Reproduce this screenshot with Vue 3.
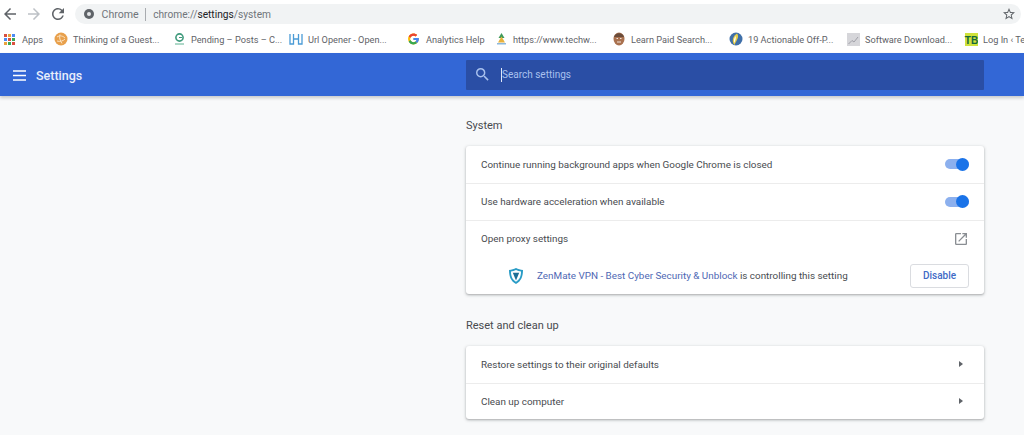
<script setup>
const bookmarks = [
  { name: 'Thinking of a Guest...', icon: 'guest', w: 118 },
  { name: 'Pending – Posts – C...', icon: 'pending', w: 117 },
  { name: 'Url Opener - Open...', icon: 'url', w: 118 },
  { name: 'Analytics Help', icon: 'google', w: 87 },
  { name: 'https://www.techw...', icon: 'tech', w: 118 },
  { name: 'Learn Paid Search...', icon: 'learn', w: 117 },
  { name: '19 Actionable Off-P...', icon: 'off', w: 117 },
  { name: 'Software Download...', icon: 'soft', w: 118 },
  { name: 'Log In ‹ Te', icon: 'tb', w: 60 }
]
const appColors = ['#d9503f', '#e8a33d', '#4c8bf5', '#4c8bf5', '#d9503f', '#3aa757', '#e8a33d', '#3aa757', '#d9503f']
</script>

<template>
  <div class="page">
    <div class="toolbar">
      <svg class="nav" width="12" height="12" viewBox="4 4 16 16"><path fill="#5f6368" d="M20 11H7.83l5.59-5.59L12 4l-8 8 8 8 1.41-1.41L7.83 13H20v-2z"/></svg>
      <svg class="nav" width="12" height="12" viewBox="4 4 16 16"><path fill="#bdc1c6" d="M12 4l-1.41 1.41L16.17 11H4v2h12.17l-5.58 5.59L12 20l8-8z"/></svg>
      <svg class="nav reload" width="12" height="12" viewBox="4 4 16 16"><path fill="#5f6368" d="M17.65 6.35A7.96 7.96 0 0 0 12 4c-4.42 0-7.99 3.58-7.99 8s3.57 8 7.99 8c3.73 0 6.84-2.55 7.73-6h-2.08A5.99 5.99 0 0 1 12 18c-3.31 0-6-2.69-6-6s2.69-6 6-6c1.66 0 3.14.69 4.22 1.78L13 11h7V4l-2.35 2.35z"/></svg>
      <div class="omnibox">
        <svg class="lock" width="10" height="10" viewBox="0 0 12 12"><circle cx="6" cy="6" r="6" fill="#5f6368"/><circle cx="6" cy="6" r="2.4" fill="#e4e6e8"/></svg>
        <span class="site">Chrome</span>
        <span class="sep"></span>
        <span class="url">chrome://<b>settings</b>/system</span>
        <svg class="star" width="12" height="12" viewBox="2 2 20 20"><path fill="#5f6368" d="M22 9.24l-7.19-.62L12 2 9.19 8.63 2 9.24l5.46 4.73L5.82 21 12 17.27 18.18 21l-1.63-7.03L22 9.24zM12 15.4l-3.76 2.27 1-4.28-3.32-2.88 4.38-.38L12 6.1l1.71 4.04 4.38.38-3.32 2.88 1 4.28L12 15.4z"/></svg>
      </div>
    </div>

    <div class="bookmarks">
      <div class="bm apps">
        <span class="grid"><i v-for="(c, i) in appColors" :key="i" :style="{ background: c }"></i></span>
        <span>Apps</span>
      </div>
      <div v-for="b in bookmarks" :key="b.name" class="bm" :style="{ width: b.w + 'px' }">
        <svg class="fav" width="14" height="14" viewBox="0 0 14 14">
          <template v-if="b.icon === 'guest'">
            <circle cx="7" cy="7" r="6.5" fill="#e8a04c"/>
            <path d="M3 5c3-2 6-1 8 1M3 9c3 1 6 0 8-2M6 2.5c-1 3 0 6 2 9" fill="none" stroke="#fbe3c2" stroke-width="1"/>
          </template>
          <template v-else-if="b.icon === 'pending'">
            <circle cx="7.5" cy="5.5" r="3.6" fill="none" stroke="#3f9a7c" stroke-width="1.6"/>
            <path d="M7 5.5h3" stroke="#3f9a7c" stroke-width="1"/>
            <path d="M3 12h9" stroke="#8cc7b0" stroke-width="1.4"/>
          </template>
          <template v-else-if="b.icon === 'url'">
            <path d="M1 2v10h3.5V2M9.5 2v10H13V2M4.5 7h5" fill="none" stroke="#4a9bd6" stroke-width="1.3"/>
          </template>
          <template v-else-if="b.icon === 'google'">
            <g transform="translate(0 .5) scale(.27)">
              <path fill="#fbbc05" d="M43.6 20.5H42V20H24v8h11.3C33.7 32.7 29.2 36 24 36c-6.6 0-12-5.4-12-12s5.4-12 12-12c3.1 0 5.8 1.2 7.9 3l5.7-5.7C34 6.1 29.3 4 24 4 13 4 4 13 4 24s9 20 20 20 20-9 20-20c0-1.3-.1-2.4-.4-3.5z"/>
              <path fill="#ea4335" d="M6.3 14.7l6.6 4.8C14.7 15.1 19 12 24 12c3.1 0 5.8 1.2 7.9 3l5.7-5.7C34 6.1 29.3 4 24 4 16.3 4 9.7 8.3 6.3 14.7z"/>
              <path fill="#34a853" d="M24 44c5.2 0 9.9-2 13.4-5.2l-6.2-5.2C29.2 35.1 26.7 36 24 36c-5.2 0-9.6-3.3-11.3-8l-6.5 5C9.5 39.6 16.2 44 24 44z"/>
              <path fill="#4285f4" d="M43.6 20.5H42V20H24v8h11.3c-.8 2.2-2.2 4.2-4.1 5.6l6.2 5.2C37 39.2 44 34 44 24c0-1.3-.1-2.4-.4-3.5z"/>
            </g>
          </template>
          <template v-else-if="b.icon === 'tech'">
            <path d="M7.5 1l3 5h-6z" fill="#3f9a5a"/>
            <path d="M7.5 4.5l3.5 6H4z" fill="#e8b23d"/>
            <path d="M3 11h9v1.5H3z" fill="#8db8dc"/>
          </template>
          <template v-else-if="b.icon === 'learn'">
            <ellipse cx="7" cy="7" rx="5.5" ry="6.5" fill="#a9714f"/>
            <path d="M2 5C3 0 11 0 12 5z" fill="#6b4c3b"/>
            <path d="M4.5 6.5H6M8 6.5h1.5M5 10h4" stroke="#f1e4da" stroke-width="1"/>
          </template>
          <template v-else-if="b.icon === 'off'">
            <circle cx="7" cy="7" r="6.5" fill="#3f6fa8"/>
            <path d="M8 1.5C11 5 7 9 5.5 13 2 9 4.5 3.5 8 1.5z" fill="#e6cf4a"/>
            <path d="M6.5 4C7.5 6 6 9 5.5 11 4.5 9 5 6 6.5 4z" fill="#fff"/>
          </template>
          <template v-else-if="b.icon === 'soft'">
            <rect x="1" y="1" width="13" height="13" fill="#d6d6da"/>
            <path d="M2.5 12L6 8.5l2 1.5 4-5" fill="none" stroke="#a0a0a8" stroke-width="1"/>
          </template>
          <template v-else>
            <rect x="1" y="1" width="13" height="13" fill="#cfe23a"/>
            <text x="7.5" y="11.5" text-anchor="middle" font-size="10" font-weight="700" font-family="Liberation Sans" fill="#14683c">TB</text>
          </template>
        </svg>
        <span>{{ b.name }}</span>
      </div>
    </div>

    <header class="header">
      <div class="brand">
        <svg width="13" height="11" viewBox="0 0 13 11"><path d="M0 1h13M0 5.500h13M0 10h13" stroke="#fff" stroke-width="1.500"/></svg>
        <span>Settings</span>
      </div>
      <div class="search">
        <svg class="search-icon" width="13" height="13" viewBox="3 3 18 18"><path fill="#a9c1ee" d="M15.5 14h-.79l-.28-.27A6.47 6.47 0 0 0 16 9.5 6.5 6.5 0 1 0 9.5 16c1.61 0 3.09-.59 4.23-1.57l.27.28v.79l5 4.99L20.49 19l-4.99-5zm-6 0C7.01 14 5 11.99 5 9.5S7.01 5 9.5 5 14 7.01 14 9.5 11.99 14 9.5 14z"/></svg>
        <span class="caret"></span>
        <span class="placeholder">Search settings</span>
      </div>
    </header>

    <main class="content">
      <h2>System</h2>
      <section class="card">
        <div class="row">
          <span>Continue running background apps when Google Chrome is closed</span>
          <span class="toggle"><i></i></span>
        </div>
        <div class="row">
          <span>Use hardware acceleration when available</span>
          <span class="toggle"><i></i></span>
        </div>
        <div class="row">
          <span>Open proxy settings</span>
          <svg class="ext" width="12" height="12" viewBox="3 3 18 18"><path fill="#8a8e93" d="M19 19H5V5h7V3H5a2 2 0 0 0-2 2v14a2 2 0 0 0 2 2h14c1.1 0 2-.9 2-2v-7h-2v7zM14 3v2h3.59l-9.83 9.83 1.41 1.41L19 6.41V10h2V3h-7z"/></svg>
        </div>
        <div class="ext-row">
          <svg class="shield" width="14" height="16" viewBox="0 0 14 16">
            <path d="M7 0c2.2 1.200 4.400 1.800 7 2 0 6-1.500 11-7 14C1.500 13 0 8 0 2c2.600-.2 4.800-.8 7-2z" fill="#2a9cc6"/>
            <path d="M7 2c1.700.9 3.300 1.300 5 1.500 0 4.500-1.200 8-5 10.200C3.200 11.500 2 8 2 3.500 3.700 3.300 5.300 2.900 7 2z" fill="#fff"/>
            <path d="M3.800 4.800h6.400L7 12.500z" fill="#1e6f96"/>
          </svg>
          <span class="ext-text"><span class="link">ZenMate VPN - Best Cyber Security &amp; Unblock</span> is controlling this setting</span>
          <button class="btn">Disable</button>
        </div>
      </section>

      <h2>Reset and clean up</h2>
      <section class="card">
        <div class="row">
          <span>Restore settings to their original defaults</span>
          <span class="arrow"></span>
        </div>
        <div class="row">
          <span>Clean up computer</span>
          <span class="arrow"></span>
        </div>
      </section>
    </main>
  </div>
</template>

<style>
html, body {
  margin: 0;
  background: #f8f9fa;
}
</style>

<style scoped>
.page {
  width: 1024px;
  height: 435px;
  overflow: hidden;
  background: #f8f9fa;
  font-family: Roboto, "Liberation Sans", sans-serif;
  color: #484b4f;
}

.toolbar {
  height: 28px;
  box-sizing: border-box;
  padding: 0 3px 0 4px;
  display: flex;
  align-items: center;
  background: #fff;
}

.nav {
  margin-right: 12px;
  flex: none;
}

.nav.reload {
  margin-right: 11px;
}

.omnibox {
  flex: 1;
  height: 20px;
  padding: 0 6px 0 9px;
  border-radius: 10px;
  background: #f1f3f4;
  display: flex;
  align-items: center;
  font-size: 10.2px;
  color: #70757a;
}

.lock {
  flex: none;
}

.site {
  margin-left: 7.5px;
  font-size: 10.6px;
}

.sep {
  width: 1px;
  height: 13px;
  background: #a8abaf;
  margin: 0 7px 0 6.5px;
}

.url b {
  font-weight: 400;
  color: #202124;
}

.star {
  margin-left: auto;
}

.bookmarks {
  height: 25px;
  box-sizing: border-box;
  padding: 0 0 3px 4px;
  display: flex;
  align-items: center;
  background: #fff;
  font-size: 9.2px;
  color: #5f6368;
  white-space: nowrap;
  overflow: hidden;
}

.bm {
  display: flex;
  align-items: center;
  gap: 5px;
  flex: none;
}

.fav {
  flex: none;
}

.apps {
  width: 50px;
  gap: 7px;
}

.grid {
  width: 11px;
  display: grid;
  grid-template-columns: repeat(3, 3px);
  gap: 1px;
}

.grid i {
  height: 3px;
}

.header {
  height: 43px;
  box-sizing: border-box;
  padding-top: 1px;
  display: flex;
  align-items: center;
  background: #3367d6;
  box-shadow: 0 2px 3px rgba(60, 64, 67, 0.25);
  color: #fff;
  position: relative;
}

.brand {
  width: 466px;
  padding-left: 13px;
  box-sizing: border-box;
  display: flex;
  align-items: center;
  gap: 10px;
  font-size: 12.5px;
  font-weight: 500;
  color: #e8eefb;
}

.search {
  width: 518px;
  height: 30px;
  padding: 0 0 1px 10px;
  box-sizing: border-box;
  display: flex;
  align-items: center;
  background: #2a4ea5;
  border-radius: 1px;
  font-size: 10px;
  color: #a9c1ee;
}

.search-icon {
  flex: none;
}

.caret {
  width: 1px;
  height: 14px;
  margin-left: 12px;
  background: #dfe7f8;
}

.content {
  width: 518px;
  margin-left: 466px;
}

h2 {
  margin: 0;
  height: 50px;
  box-sizing: border-box;
  padding-top: 22.5px;
  font-size: 11px;
  line-height: 13px;
  font-weight: 400;
  color: #484b4f;
}

.card {
  background: #fff;
  border-radius: 3px;
  box-shadow: 0 1px 2px rgba(60, 64, 67, 0.3), 0 1px 3px 1px rgba(60, 64, 67, 0.12);
  font-size: 9.9px;
  margin-bottom: 2px;
}

.row {
  height: 37px;
  padding: 0 15px 1px;
  display: flex;
  align-items: center;
  justify-content: space-between;
  border-top: 1px solid #ececec;
  box-sizing: border-box;
}

.row:first-child {
  border-top: none;
}

.row:last-child {
  height: 36px;
}

.toggle {
  width: 24px;
  height: 10px;
  border-radius: 5px;
  background: #8cb0ee;
  position: relative;
}

.toggle i {
  position: absolute;
  right: 0;
  top: -1.5px;
  width: 13px;
  height: 13px;
  border-radius: 50%;
  background: #1a73e8;
}

.ext {
  margin-right: 2px;
}

.ext-row {
  height: 37px;
  padding: 0 15px 0 43px;
  display: flex;
  align-items: center;
}

.shield {
  flex: none;
}

.ext-text {
  margin-left: 14px;
  flex: 1;
}

.link {
  color: #4f68b4;
}

.btn {
  width: 59px;
  height: 24px;
  padding: 0;
  background: #fff;
  border: 1px solid #dadce0;
  border-radius: 3px;
  color: #3f6bc6;
  font: 500 10px Roboto, "Liberation Sans", sans-serif;
}

.arrow {
  margin-right: 6px;
  width: 0;
  height: 0;
  border-left: 4px solid #5f6368;
  border-top: 3.5px solid transparent;
  border-bottom: 3.5px solid transparent;
}
</style>
